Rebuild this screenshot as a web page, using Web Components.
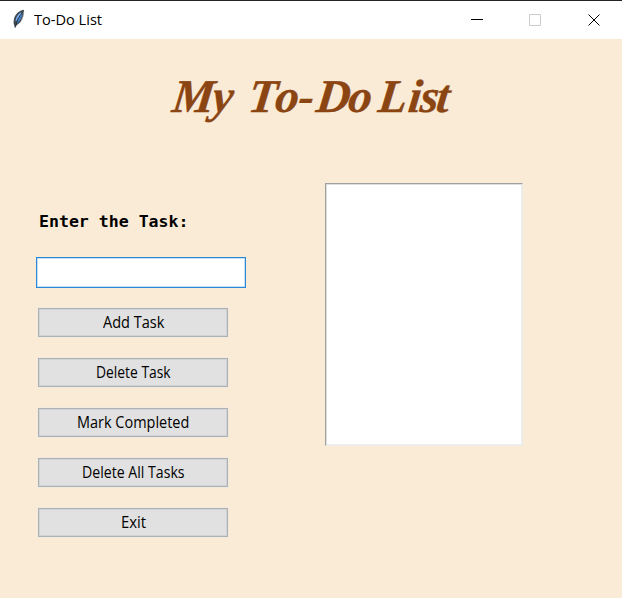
<!DOCTYPE html>
<html lang="en"><head><meta charset="utf-8"><title>To-Do List</title>
<style>html,body{margin:0;height:100%;overflow:hidden}</style></head><body>
<todo-window></todo-window>
<script>
const define = (name, markup, ready) => customElements.define(name, class extends HTMLElement {
  constructor(){ super(); this.attachShadow({mode:'open'}).innerHTML = markup; }
  connectedCallback(){ if (ready) ready(this); }
});

// Text scaled horizontally to the width given in its attribute.
define('fit-text', `<style>:host{display:block;width:var(--w);white-space:nowrap}span{display:inline-block;transform-origin:0 50%}</style><span><slot></slot></span>`, el => {
  const w = +el.getAttribute('width');
  el.style.setProperty('--w', w + 'px');
  const s = el.shadowRoot.querySelector('span');
  s.style.transform = `scaleX(${w / s.offsetWidth})`;
});

define('title-bar', `<style>
:host{display:flex;box-sizing:border-box;height:39px;border-top:1px solid #242424;background:#fff;align-items:center;color:#000;font:15px/20px "Open Sans","Noto Sans",sans-serif}
.feather{width:16px;height:20px;margin:0 7px 2px 11px}
fit-text{flex:none;margin-bottom:2px}
.controls{margin-left:auto;display:flex}
.controls svg{display:block;width:58px;height:38px}.controls svg:last-child{width:57px}
</style>
<svg class="feather" viewBox="0 0 16 20"><path d="M12.700.8C7.500 2 4 5.500 3 10c-.8 3.300-.3 5 .3 6.200L3.800 19l1.400-2.500c2.900-1.500 5.800-4.500 6.800-8.500.6-2.500 1.600-5.500.7-7.200Z" fill="#3e4650"/><path d="M10.500 3.200C7.500 4.500 4.700 8 4.500 12.500L8.500 9Z" fill="#7db0ed"/><path d="M11.500 3.500C11.400 8 9 12.500 5.500 15L6.500 9.500Z" fill="#437fc4"/><path d="M11.500 3.500Q6.500 8.500 4.300 18.500" stroke="#202a36" stroke-width=".8" fill="none"/><path d="M12.700 2.400c0 3-1 7-2.500 9" stroke="#aaa" stroke-width=".8" fill="none"/></svg>
<fit-text width="68"><slot></slot></fit-text>
<div class="controls">
<svg viewBox="0 0 58 38"><path d="M22 18.500h12" stroke="#000"/></svg>
<svg viewBox="0 0 58 38"><path d="M22.500 13.500h11v11h-11z" fill="none" stroke="#ccc"/></svg>
<svg viewBox="0 0 57 38"><path d="M23.500 13.500l11 11m0-11l-11 11" stroke="#000"/></svg>
</div>`);

define('app-heading', `<style>:host{display:block;height:144px}svg{display:block}
text{font:italic 700 47px "Liberation Serif",serif;fill:#8b4513;stroke:#8b4513;stroke-width:.3}</style>
<svg width="622" height="90" viewBox="0 39 622 90"><text transform="translate(0 111.500) skewX(-7)" x="171 211 232 247 274 297 315 347 368 377 407 419 435" y="0">My To-Do List</text></svg>`);

define('task-label', `<style>:host{display:block;margin-left:2px;color:#000;font:700 16px/20px "DejaVu Sans Mono","Liberation Mono",monospace}</style><fit-text width="150"><slot></slot></fit-text>`);

define('task-entry', `<style>:host{display:block;width:210px;height:31px}
div{box-sizing:border-box;height:31px;background:#fff;border:1px solid #2b87d3;box-shadow:inset 0 0 0 .5px #8fc5ee}</style><div></div>`);

define('task-button', `<style>:host{display:flex;box-sizing:border-box;width:190px;height:29px;margin-left:1px;padding:0 0 1px 0;align-items:center;justify-content:center;background:#e1e1e1;border:1px solid #adb0b5;box-shadow:inset 0 0 0 1px #d2d3d5,0 0 0 1px #f3eadf;color:#000;font:15.500px/20px "Open Sans","Noto Sans",sans-serif}</style><slot></slot>`);

define('task-list', `<style>:host{display:block;box-sizing:border-box;width:198px;height:263px;background:#fff;border:1px solid;border-color:#a0a0a0 #ececec #ececec #a0a0a0;box-shadow:inset 1px 1px #dedede,inset -1px -1px #ececec}</style>`);

define('todo-window', `<style>
:host{display:block;height:598px;background:#faebd7}
main{display:grid;grid-template-columns:288px 198px;padding-left:37px}
.form{display:flex;flex-direction:column;padding-top:29px}
task-entry{margin:25px 0 20px -.6px}
.buttons{display:flex;flex-direction:column;gap:21px}
</style>
<title-bar>To-Do List</title-bar>
<app-heading></app-heading>
<main><div class="form"><task-label>Enter the Task:</task-label><task-entry></task-entry>
<div class="buttons">
<task-button><fit-text width="61">Add Task</fit-text></task-button>
<task-button><fit-text width="75">Delete Task</fit-text></task-button>
<task-button><fit-text width="112">Mark Completed</fit-text></task-button>
<task-button><fit-text width="103">Delete All Tasks</fit-text></task-button>
<task-button><fit-text width="25">Exit</fit-text></task-button>
</div></div><task-list></task-list></main>`);
</script></body></html>
